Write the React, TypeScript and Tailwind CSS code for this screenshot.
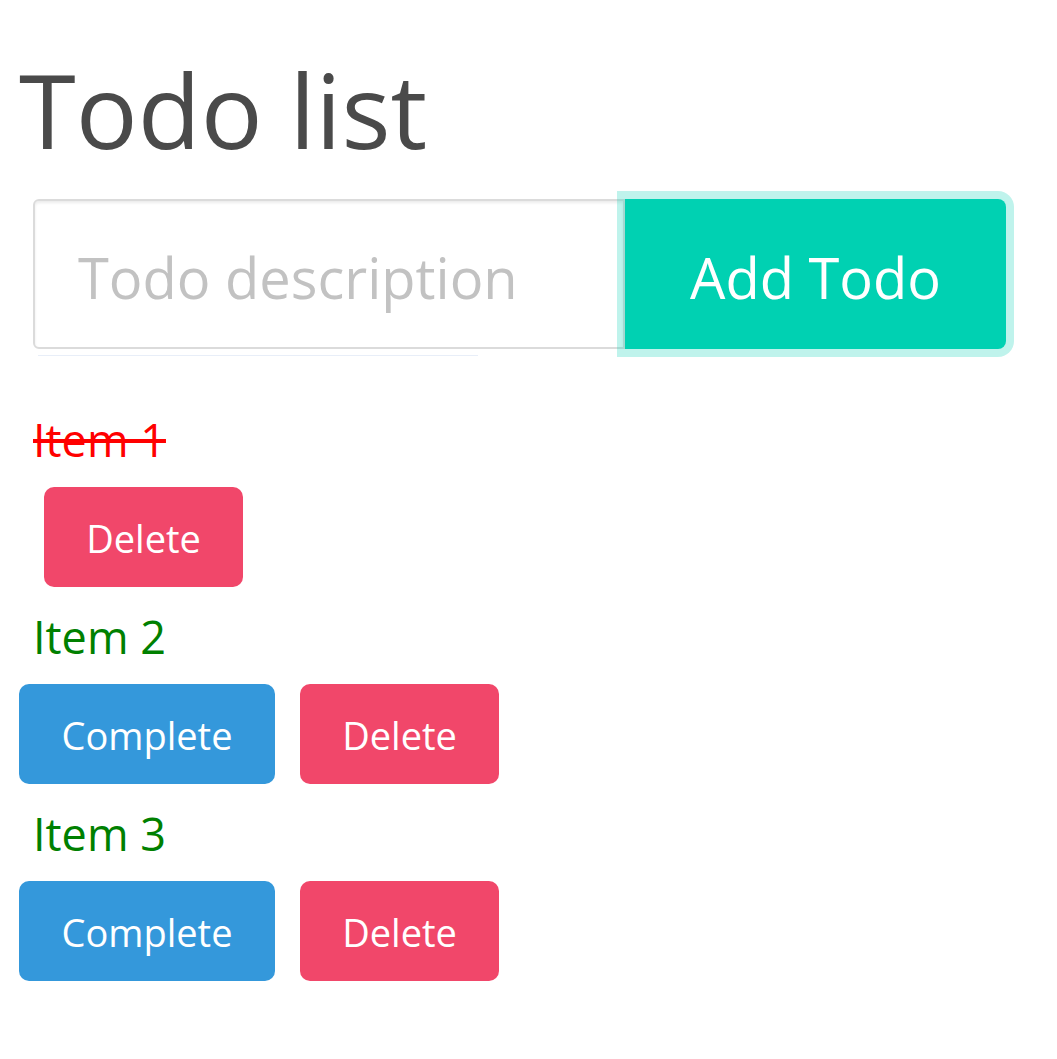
import React from "react";

const font = { fontFamily: '"Open Sans", "Noto Sans", sans-serif' };

function Btn({ color, children, className = "" }: { color: "blue" | "red"; children: React.ReactNode; className?: string }) {
  const bg = color === "blue" ? "bg-[#3498db]" : "bg-[#f1476a]";
  return (
    <button
      className={`${bg} ${className} h-[100px] rounded-[10px] text-white text-[38px] leading-none flex items-center justify-center pt-[2px]`}
    >
      {children}
    </button>
  );
}

function Item({ label, done }: { label: string; done?: boolean }) {
  return (
    <div className="mb-[16px]">
      <div
        className={`h-[68px] pl-[14px] text-[45px] leading-[68px] ${done ? "text-[#ff0000] line-through" : "text-[#008000]"}`}
      >
        {label}
      </div>
      <div className="mt-[13px] flex">
        {done ? (
          <Btn color="red" className="ml-[25px] w-[199px]">Delete</Btn>
        ) : (
          <>
            <Btn color="blue" className="w-[256px]">Complete</Btn>
            <Btn color="red" className="ml-[25px] w-[199px]">Delete</Btn>
          </>
        )}
      </div>
    </div>
  );
}

export default function App() {
  return (
    <div className="min-h-[1059px] w-[1057px] bg-white pl-[19px]" style={font}>
      <h1 className="pt-[55px] h-[160px] text-[103px] leading-[108px] text-[#4a4a4a]">Todo list</h1>
      <div className="ml-[14px] mt-[39px] flex w-[973px]">
        <div className="h-[150px] w-[592px] rounded-l-[6px] border-2 border-[#dbdbdb] shadow-[inset_0_2px_3px_rgba(10,10,10,0.08)] flex items-center pl-[43px] pt-[6px] text-[56px] text-[#c2c2c2]">
          Todo description
        </div>
        <button className="h-[150px] w-[381px] rounded-r-[8px] bg-[#00d1b2] text-white text-[56px] leading-none pt-[6px] shadow-[0_0_0_8px_rgba(0,209,178,0.25)] flex items-center justify-center">
          Add Todo
        </button>
      </div>
      <div className="ml-[19px] mt-[6px] h-px w-[440px] bg-[#e8eef8]" />
      <div className="mt-[50px]">
        <Item label="Item 1" done />
        <Item label="Item 2" />
        <Item label="Item 3" />
      </div>
    </div>
  );
}
